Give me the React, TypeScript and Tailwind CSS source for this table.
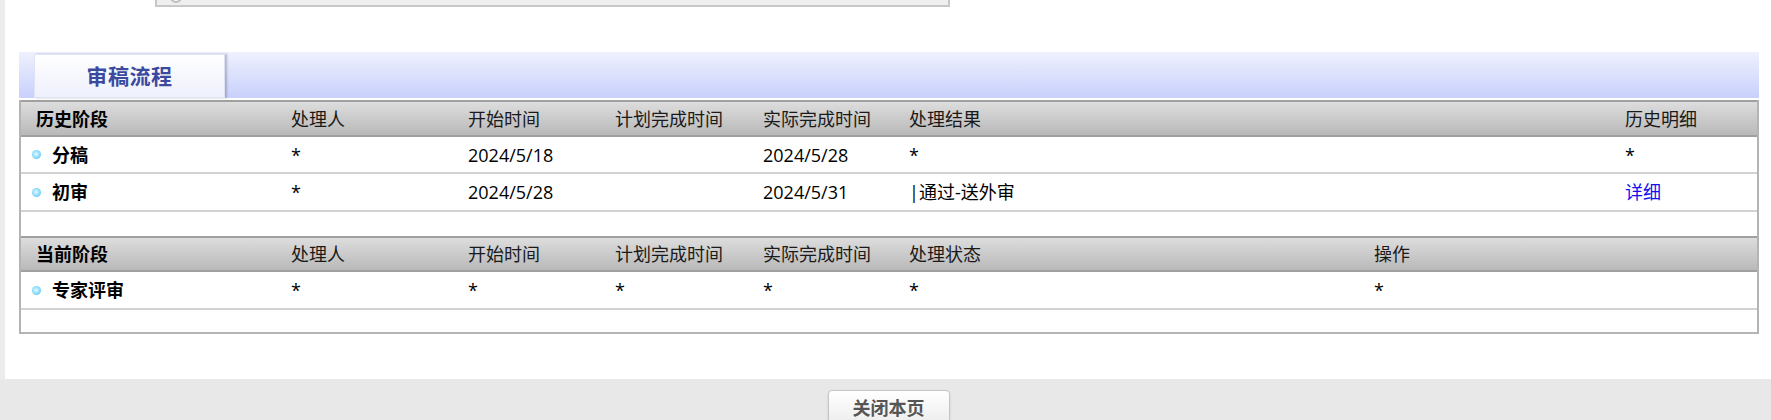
import React from "react";

type Cell = { text: string; link?: boolean };

const HIST_HEAD = ["处理人", "开始时间", "计划完成时间", "实际完成时间", "处理结果", "历史明细"];
const CUR_HEAD = ["处理人", "开始时间", "计划完成时间", "实际完成时间", "处理状态", "操作"];

const HIST_ROWS: { name: string; cells: Cell[]; h: string }[] = [
  {
    name: "分稿",
    h: "h-[37px]",
    cells: [{ text: "*" }, { text: "2024/5/18" }, { text: "" }, { text: "2024/5/28" }, { text: "*" }, { text: "*" }],
  },
  {
    name: "初审",
    h: "h-[38px]",
    cells: [
      { text: "*" },
      { text: "2024/5/28" },
      { text: "" },
      { text: "2024/5/31" },
      { text: "|通过-送外审" },
      { text: "详细", link: true },
    ],
  },
];

const CUR_ROWS: { name: string; cells: Cell[] }[] = [
  {
    name: "专家评审",
    cells: [{ text: "*" }, { text: "*" }, { text: "*" }, { text: "*" }, { text: "*" }, { text: "*" }],
  },
];

// history table columns end with 历史明细 at x≈1625, current table with 操作 at x≈1374
const HIST_GRID = "grid grid-cols-[270px_177px_147px_148px_146px_716px_1fr]";
const CUR_GRID = "grid grid-cols-[270px_177px_147px_148px_146px_465px_1fr]";

function Dot() {
  return (
    <span className="inline-block w-[9px] h-[9px] rounded-full bg-[radial-gradient(circle_at_45%_45%,#e6fbff_0%,#8fdcfa_50%,#3fb6e8_100%)]" />
  );
}

function HeadRow({ title, cols, grid, h }: { title: string; cols: string[]; grid: string; h: string }) {
  return (
    <div
      className={`${grid} ${h} items-center border-t-2 border-b-2 border-[#a0a0a0] bg-gradient-to-b from-[#dddddd] to-[#b9b9b9] text-[18px] text-[#1a1a1a]`}
    >
      <span className="pl-[15px] font-bold text-black">{title}</span>
      {cols.map(c => (
        <span key={c} className="whitespace-nowrap">{c}</span>
      ))}
    </div>
  );
}

function DataRow({ name, cells, grid, h }: { name: string; cells: Cell[]; grid: string; h: string }) {
  return (
    <div className={`${grid} ${h} items-center border-b-2 border-[#d2d2d2] text-[18px] text-black`}>
      <span className="pl-[11px] flex items-center gap-[11px] font-bold">
        <Dot />
        {name}
      </span>
      {cells.map((c, i) => (
        <span key={i} className={`whitespace-nowrap ${c.link ? "text-[#1010f0] cursor-pointer" : ""}`}>
          {c.text}
        </span>
      ))}
    </div>
  );
}

export default function App() {
  return (
    <div className="w-[1771px] h-[420px] overflow-hidden bg-[#ececec] font-['Open_Sans','Noto_Sans_CJK_SC',sans-serif] leading-none">
      {/* white page body */}
      <div className="ml-[5px] h-[379px] bg-white flex flex-col">
        {/* bottom edge of the box above, scrolled out of view */}
        <div className="ml-[150px] w-[795px] h-[7px] bg-[#efefef] border-x-2 border-b-2 border-[#c8c8c8] flex">
          <span className="ml-[13px] mt-[-9px] w-[12px] h-[12px] rounded-full border-2 border-[#bdbdbd] bg-[#f6f6f6]" />
        </div>

        <section className="ml-[14px] mr-[12px] mt-[45px]">
          {/* tab strip */}
          <div className="h-[46px] flex items-end pl-[15px] bg-gradient-to-b from-[#eff1fd] to-[#c8d0fc]">
            <div className="w-[191px] h-[44px] flex items-center justify-center border border-[#dfe2f3] bg-gradient-to-b from-white to-[#eef0fc] shadow-[2px_0_2px_rgba(80,80,110,0.35)]">
              <span className="text-[21px] font-bold text-[#3b4a9e] tracking-[0.5px]">审稿流程</span>
            </div>
          </div>

          <div className="mt-[2px] border-x-2 border-b-2 border-[#b4b4b4]">
            <HeadRow title="历史阶段" cols={HIST_HEAD} grid={HIST_GRID} h="h-[37px]" />
            {HIST_ROWS.map(r => (
              <DataRow key={r.name} name={r.name} cells={r.cells} grid={HIST_GRID} h={r.h} />
            ))}
            <div className="h-[24px]" />

            <HeadRow title="当前阶段" cols={CUR_HEAD} grid={CUR_GRID} h="h-[36px]" />
            {CUR_ROWS.map(r => (
              <DataRow key={r.name} name={r.name} cells={r.cells} grid={CUR_GRID} h="h-[38px]" />
            ))}
            <div className="h-[22px]" />
          </div>
        </section>
      </div>

      {/* footer */}
      <div className="h-[41px] bg-[#e8e8e8] flex justify-center">
        <button className="mt-[11px] ml-[6px] w-[122px] h-[36px] rounded-[4px] border border-[#c6c6c6] bg-gradient-to-b from-white to-[#ececec] shadow-[0_1px_2px_rgba(0,0,0,0.15)] text-[18px] font-bold text-[#555555] flex justify-center pt-[8px]">
          关闭本页
        </button>
      </div>
    </div>
  );
}
